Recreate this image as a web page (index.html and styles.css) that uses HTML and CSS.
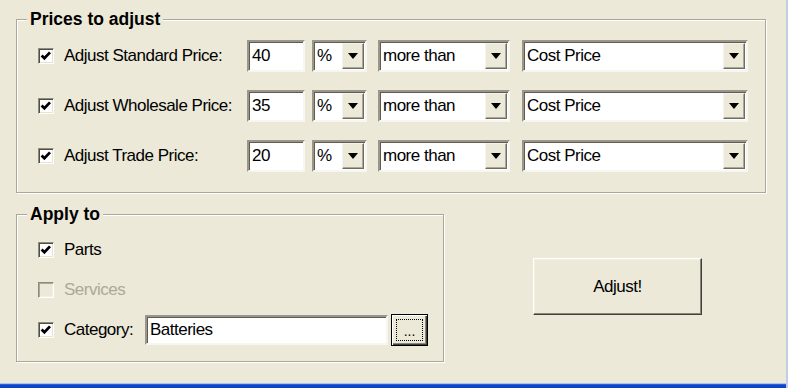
FILE: index.html
```html
<!DOCTYPE html>
<html lang="en">
<head>
<meta charset="utf-8">
<title>Adjust Prices</title>
<link rel="stylesheet" href="styles.css">
</head>
<body>
<div class="window">
  <section class="group group-prices">
    <div class="group-title">Prices to adjust</div>
    <div class="group-body prices-body">
      <div class="price-row">
        <span class="box"><svg viewBox="0 0 16 16" width="16" height="16"><polyline points="3.6,7.4 6.4,10.2 12,4.4" fill="none" stroke="#000" stroke-width="2.8"/></svg></span>
        <span class="row-label">Adjust Standard Price:</span>
        <div class="field sunken w-amount"><span class="value">40</span></div>
        <div class="field sunken combo w-unit"><span class="value">%</span><span class="drop"><i class="arrow"></i></span></div>
        <div class="field sunken combo w-rel"><span class="value">more than</span><span class="drop"><i class="arrow"></i></span></div>
        <div class="field sunken combo w-base"><span class="value">Cost Price</span><span class="drop"><i class="arrow"></i></span></div>
      </div>
      <div class="price-row">
        <span class="box"><svg viewBox="0 0 16 16" width="16" height="16"><polyline points="3.6,7.4 6.4,10.2 12,4.4" fill="none" stroke="#000" stroke-width="2.8"/></svg></span>
        <span class="row-label">Adjust Wholesale Price:</span>
        <div class="field sunken w-amount"><span class="value">35</span></div>
        <div class="field sunken combo w-unit"><span class="value">%</span><span class="drop"><i class="arrow"></i></span></div>
        <div class="field sunken combo w-rel"><span class="value">more than</span><span class="drop"><i class="arrow"></i></span></div>
        <div class="field sunken combo w-base"><span class="value">Cost Price</span><span class="drop"><i class="arrow"></i></span></div>
      </div>
      <div class="price-row">
        <span class="box"><svg viewBox="0 0 16 16" width="16" height="16"><polyline points="3.6,7.4 6.4,10.2 12,4.4" fill="none" stroke="#000" stroke-width="2.8"/></svg></span>
        <span class="row-label">Adjust Trade Price:</span>
        <div class="field sunken w-amount"><span class="value">20</span></div>
        <div class="field sunken combo w-unit"><span class="value">%</span><span class="drop"><i class="arrow"></i></span></div>
        <div class="field sunken combo w-rel"><span class="value">more than</span><span class="drop"><i class="arrow"></i></span></div>
        <div class="field sunken combo w-base"><span class="value">Cost Price</span><span class="drop"><i class="arrow"></i></span></div>
      </div>
    </div>
  </section>

  <div class="lower">
    <section class="group group-apply">
      <div class="group-title">Apply to</div>
      <div class="group-body apply-body">
        <div class="apply-row">
          <span class="box"><svg viewBox="0 0 16 16" width="16" height="16"><polyline points="3.6,7.4 6.4,10.2 12,4.4" fill="none" stroke="#000" stroke-width="2.8"/></svg></span>
          <span class="opt-label">Parts</span>
        </div>
        <div class="apply-row">
          <span class="box disabled"></span>
          <span class="opt-label disabled-text">Services</span>
        </div>
        <div class="apply-row">
          <span class="box"><svg viewBox="0 0 16 16" width="16" height="16"><polyline points="3.6,7.4 6.4,10.2 12,4.4" fill="none" stroke="#000" stroke-width="2.8"/></svg></span>
          <span class="opt-label cat-label">Category:</span>
          <div class="field sunken w-cat"><span class="value">Batteries</span></div>
          <button class="btn btn-browse" type="button"><span class="focus-rect">...</span></button>
        </div>
      </div>
    </section>
    <button class="btn btn-adjust" type="button">Adjust!</button>
  </div>

  <div class="frame-bottom"></div>
</div>
</body>
</html>
```

FILE: styles.css
```css
* { box-sizing: border-box; }

html, body {
  margin: 0;
  padding: 0;
  background: #ECE9D8;
}

body {
  font-family: "Liberation Sans", Arial, sans-serif;
  font-size: 17px;
  letter-spacing: -0.5px;
  color: #000;
}

.window {
  width: 788px;
  height: 388px;
  background: #ECE9D8;
  display: flex;
  flex-direction: column;
  overflow: hidden;
  border-right: 2px solid #c4cde0;
}

/* Group boxes (etched frame) */
.group {
  border: 1px solid #aca899;
  box-shadow: inset 1px 1px 0 #fff, 1px 1px 0 #fff;
}

.group-title {
  width: fit-content;
  margin: -10px 0 0 10px;
  padding: 0 3px;
  line-height: 18px;
  font-weight: bold;
  font-size: 17.5px;
  letter-spacing: 0;
  background: #ECE9D8;
}

.group-prices {
  margin: 19px 0 0 16px;
  width: 750px;
}

.prices-body {
  padding: 12px 0 20px 21px;
  display: flex;
  flex-direction: column;
  gap: 18px;
}

.price-row {
  display: flex;
  align-items: center;
  height: 32px;
}

/* Checkbox */
.box {
  width: 16px;
  height: 16px;
  flex: none;
  background: #fff;
  border-top: 1px solid #8f8c7e;
  border-left: 1px solid #8f8c7e;
  border-right: 1px solid #fff;
  border-bottom: 1px solid #fff;
  box-shadow: inset 1px 1px 0 #4f4d45, inset -1px -1px 0 #e6e3d3;
  display: flex;
  align-items: center;
  justify-content: center;
  overflow: hidden;
}

.box svg { display: block; flex: none; }

.box.disabled {
  background: #ECE9D8;
  box-shadow: inset 1px 1px 0 #aca899, inset -1px -1px 0 #f1efe2;
}

.row-label {
  width: 183px;
  margin-left: 10px;
  white-space: nowrap;
}

/* Sunken fields */
.sunken {
  background: #fff;
  border-style: solid;
  border-width: 2px;
  border-color: #9a978a #f7f6f0 #f7f6f0 #9a978a;
  box-shadow: inset 1px 1px 0 #5f5d53;
}

.field {
  height: 32px;
  display: flex;
  align-items: center;
  flex: none;
  white-space: nowrap;
}

.field .value {
  padding-left: 3px;
  flex: 1;
}

.w-amount { width: 58px; }
.w-unit { width: 55px; margin-left: 7px; }
.w-rel { width: 132px; margin-left: 11px; }
.w-base { width: 226px; margin-left: 12px; }

.combo { padding: 1px 1px 1px 0; align-items: stretch; }
.combo .value { display: flex; align-items: center; }

.drop {
  width: 22px;
  flex: none;
  background: #ECE9D8;
  border-style: solid;
  border-width: 1px;
  border-color: #f4f3ee #6f6d62 #6f6d62 #f4f3ee;
  box-shadow: inset -1px -1px 0 #aca899;
  display: flex;
  align-items: center;
  justify-content: center;
}

.arrow {
  width: 0;
  height: 0;
  border-left: 5px solid transparent;
  border-right: 5px solid transparent;
  border-top: 6px solid #000;
}

/* Lower area */
.lower {
  display: flex;
  align-items: flex-start;
  margin-top: 21px;
}

.group-apply {
  margin-left: 16px;
  width: 428px;
}

.apply-body {
  padding: 11px 0 15px 21px;
  display: flex;
  flex-direction: column;
  gap: 8px;
}

.apply-row {
  display: flex;
  align-items: center;
  height: 32px;
}

.opt-label {
  margin-left: 10px;
  white-space: nowrap;
}

.cat-label { width: 81px; }

.disabled-text { color: #aca899; }

.w-cat {
  width: 243px;
  height: 30px;
}

.btn {
  font-family: "Liberation Sans", Arial, sans-serif;
  font-size: 17px;
  letter-spacing: -0.5px;
  color: #000;
  background: #ECE9D8;
  padding: 0;
  margin: 0;
  border-style: solid;
  border-width: 1px;
  border-color: #fff #404040 #404040 #fff;
  box-shadow: inset -1px -1px 0 #8a877a, inset 1px 1px 0 #f1efe2;
}

.btn-browse {
  width: 37px;
  height: 32px;
  margin-left: 3px;
  border: 1px solid #000;
  box-shadow: inset 1px 1px 0 #fff, inset -1px -1px 0 #404040, inset -2px -2px 0 #8a877a;
  display: flex;
  align-items: center;
  justify-content: center;
}

.focus-rect {
  width: 27px;
  height: 22px;
  border: 1px dotted #000;
  font-size: 14px;
  line-height: 14px;
  display: flex;
  align-items: flex-end;
  justify-content: center;
  padding-bottom: 2px;
  letter-spacing: 0;
}

.btn-adjust {
  width: 169px;
  height: 57px;
  margin: 44px 0 0 89px;
  flex: none;
}

.frame-bottom {
  margin-top: auto;
  height: 5px;
  background: linear-gradient(#a9c4ef 0 1px, #2a5fdc 1px 2px, #0f43c8 2px);
}
```
